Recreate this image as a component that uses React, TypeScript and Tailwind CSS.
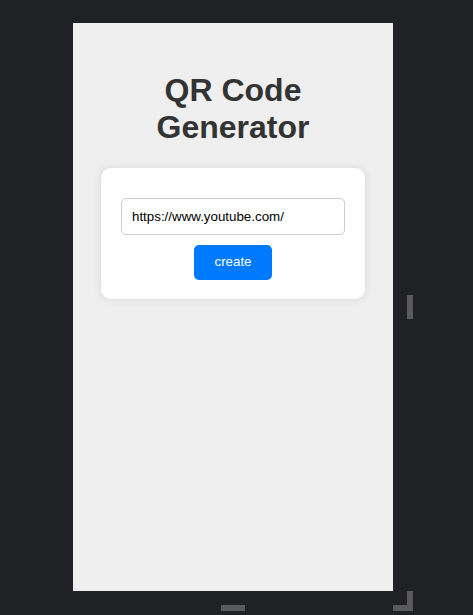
import React from "react";

export default function App() {
  return (
    <div
      className="w-full h-[615px] bg-[#202124] pt-[23px] pl-[73px] overflow-hidden"
      style={{ fontFamily: '"Liberation Sans", Arial, sans-serif' }}
    >
      <div className="grid grid-cols-[320px_20px] grid-rows-[568px_20px]">
        <div className="bg-[#efefef] flex flex-col items-center pt-[49px]">
          <h1 className="text-[32px] leading-[36.8px] font-bold text-[#333333] text-center w-[200px]">
            QR Code Generator
          </h1>
          <div className="mt-[22px] w-[264px] bg-white rounded-[10px] shadow-[0_0_10px_rgba(0,0,0,0.1)] px-[20px] pt-[30px] pb-[19px] flex flex-col items-center">
            <input
              type="text"
              defaultValue="https://www.youtube.com/"
              className="w-[224px] h-[37px] border border-[#cccccc] rounded-[5px] px-[10px] text-[13.33px] text-black outline-none bg-white"
              style={{ fontFamily: '"Liberation Sans", Arial, sans-serif' }}
            />
            <button
              className="mt-[10px] h-[35px] px-[20px] bg-[#007bff] text-white text-[13.33px] rounded-[5px]"
              style={{ fontFamily: '"Liberation Sans", Arial, sans-serif' }}
            >
              create
            </button>
          </div>
        </div>
        <div className="flex items-center justify-end">
          <div className="w-[6px] h-[24px] bg-[#5a5a5c]" />
        </div>
        <div className="flex items-end justify-center">
          <div className="w-[24px] h-[6px] bg-[#5a5a5c]" />
        </div>
        <div className="border-r-[6px] border-b-[6px] border-[#5a5a5c]" />
      </div>
    </div>
  );
}
